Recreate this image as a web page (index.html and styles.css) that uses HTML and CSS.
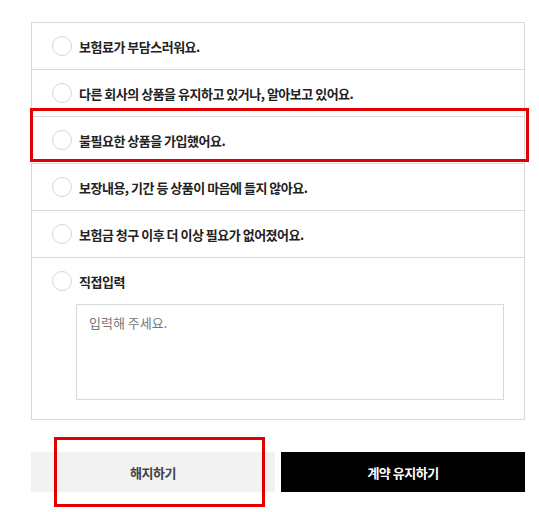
FILE: index.html
```html
<html>
<head>
  <title>해지 사유 선택</title>
  <link rel="stylesheet" href="styles.css">
</head>
<body>
  <div class="page">
    <ul class="reason-list">
      <li class="reason">
        <label class="reason-line"><span class="radio"></span>보험료가 부담스러워요.</label>
      </li>
      <li class="reason">
        <label class="reason-line"><span class="radio"></span>다른 회사의 상품을 유지하고 있거나, 알아보고 있어요.</label>
      </li>
      <li class="reason">
        <label class="reason-line"><span class="radio"></span>불필요한 상품을 가입했어요.</label>
        <div class="mark mark-reason"></div>
      </li>
      <li class="reason">
        <label class="reason-line"><span class="radio"></span>보장내용, 기간 등 상품이 마음에 들지 않아요.</label>
      </li>
      <li class="reason">
        <label class="reason-line"><span class="radio"></span>보험금 청구 이후 더 이상 필요가 없어졌어요.</label>
      </li>
      <li class="reason reason-etc">
        <label class="reason-line"><span class="radio"></span>직접입력</label>
        <textarea class="etc-input" placeholder="입력해 주세요."></textarea>
      </li>
    </ul>

    <div class="actions">
      <button class="btn btn-cancel">해지하기
        <span class="mark mark-button"></span>
      </button>
      <button class="btn btn-keep">계약 유지하기</button>
    </div>
  </div>
</body>
</html>
```

FILE: styles.css
```css
body {
  margin: 0;
  background: #fff;
  font-family: "Noto Sans CJK KR", "Noto Sans", sans-serif;
  color: #222;
}

.page {
  width: 494px;
  margin-left: 31px;
  padding-top: 22px;
}

.reason-list {
  list-style: none;
  margin: 0;
  padding: 0;
  border: 1px solid #d9d9d9;
}

.reason {
  position: relative;
  border-top: 1px solid #d9d9d9;
}

.reason:first-child {
  border-top: none;
}

.reason-line {
  display: flex;
  align-items: center;
  height: 46px;
  padding-left: 20px;
  gap: 7px;
  font-size: 13px;
  font-weight: 700;
  letter-spacing: -0.5px;
  cursor: pointer;
}

.radio {
  width: 18px;
  height: 18px;
  border: 1px solid #d6d6d6;
  border-radius: 50%;
  background: #fff;
}

.reason-etc {
  padding-bottom: 19px;
}

.etc-input {
  display: block;
  box-sizing: border-box;
  width: 428px;
  height: 96px;
  margin-left: 44px;
  padding: 8px 12px;
  border: 1px solid #d9d9d9;
  resize: none;
  font-family: "Noto Sans CJK KR", "Noto Sans", sans-serif;
  font-size: 13px;
  color: #333;
}

.etc-input::placeholder {
  color: #777;
}

.actions {
  display: flex;
  gap: 6px;
  margin-top: 32px;
}

.btn {
  position: relative;
  flex: 1;
  height: 40px;
  border: none;
  font-family: "Noto Sans CJK KR", "Noto Sans", sans-serif;
  font-size: 13px;
  font-weight: 700;
  letter-spacing: -0.5px;
}

.btn-cancel {
  background: #f2f2f2;
  color: #444;
}

.btn-keep {
  background: #000;
  color: #fff;
}

.mark {
  position: absolute;
  border: 3px solid #e30000;
  pointer-events: none;
}

.mark-reason {
  left: -2px;
  right: -5px;
  top: -9px;
  bottom: 1px;
}

.mark-button {
  left: 23px;
  top: -15px;
  width: 205px;
  height: 64px;
}
```
